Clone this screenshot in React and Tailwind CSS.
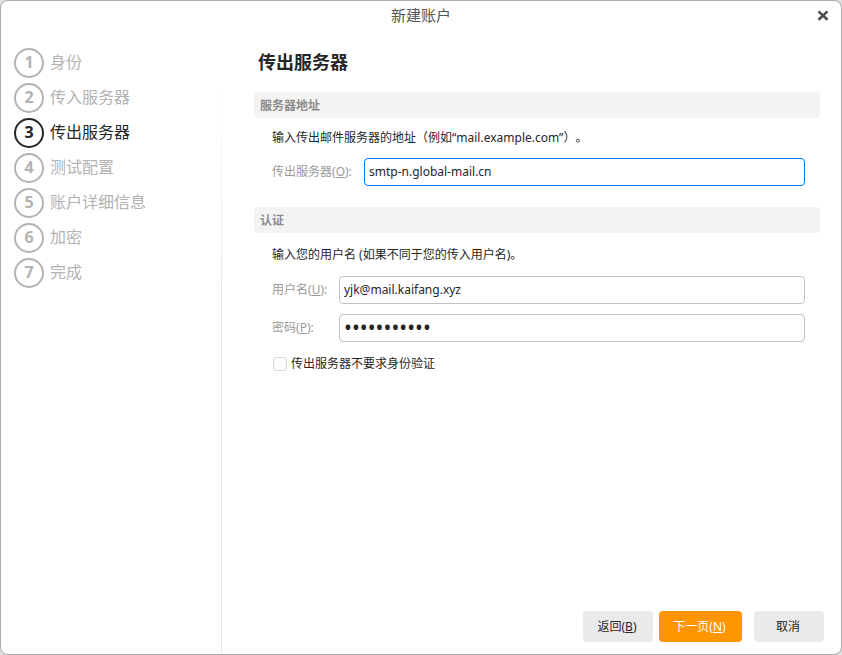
import { useState } from "react";

const steps = [
  "身份",
  "传入服务器",
  "传出服务器",
  "测试配置",
  "账户详细信息",
  "加密",
  "完成",
];

function Step({ number, label, active }) {
  return (
    <li
      aria-current={active ? "step" : undefined}
      className={`flex items-center gap-1.5 ${
        active ? "text-[#262626]" : "text-[#b3b3b3]"
      }`}
    >
      <span className="flex size-[30px] shrink-0 items-center justify-center rounded-full border-2 border-current pb-[3px] text-base leading-none font-bold">
        {number}
      </span>
      <span className="pb-0.5 text-base leading-5">{label}</span>
    </li>
  );
}

function Section({ title, children }) {
  return (
    <section>
      <h2 className="rounded bg-[#f3f3f3] px-1.5 pt-0.5 text-xs leading-6 font-bold text-[#8c8c8c]">
        {title}
      </h2>
      <div className="pr-[15px] pl-[18px]">{children}</div>
    </section>
  );
}

function Field({ id, label, accessKey, labelClass, type = "text", value, onChange, focused }) {
  return (
    <div className="flex items-center">
      <label
        htmlFor={id}
        className={`shrink-0 text-xs leading-4 text-[#999999] ${labelClass}`}
      >
        {label}(<u>{accessKey}</u>):
      </label>
      <input
        id={id}
        type={type}
        value={value}
        onChange={(e) => onChange(e.target.value)}
        className={`h-7 min-w-0 flex-1 rounded border bg-white px-1 text-[#262626] outline-none focus:border-[#007af5] ${
          type === "password" ? "text-[21px]" : "pb-0.5 text-xs"
        } ${focused ? "border-[#007af5]" : "border-[#c2c2c2]"}`}
      />
    </div>
  );
}

function App() {
  const [server, setServer] = useState("smtp-n.global-mail.cn");
  const [username, setUsername] = useState("yjk@mail.kaifang.xyz");
  const [password, setPassword] = useState("abcdefghijk");
  const [noAuth, setNoAuth] = useState(false);

  return (
    <div
      lang="zh-CN"
      className="min-h-screen bg-[#dedede] font-['Noto_Sans','Noto_Sans_CJK_SC',sans-serif] [text-spacing-trim:space-all]"
    >
      <div className="relative flex min-h-screen flex-col rounded-lg border border-[#ababab] bg-white text-[#262626]">
        <h1 className="py-0.5 text-center text-[15px] leading-6 text-[#555555]">
          新建账户
        </h1>
        <button
          type="button"
          aria-label="关闭"
          className="absolute top-2 right-3 pt-px text-[#4d4d4d]"
        >
          <svg width="12" height="12" viewBox="0 0 12 12" fill="none" stroke="currentColor" strokeWidth="2.6">
            <path d="M1.5 1.4 10.5 9.8M10.5 1.4 1.5 9.8" />
          </svg>
        </button>

        <div className="flex flex-1">
          <nav className="w-[220px] shrink-0 pt-[19px] pl-[13px]">
            <ol className="flex flex-col gap-[5px]">
              {steps.map((label, i) => (
                <Step key={label} number={i + 1} label={label} active={i === 2} />
              ))}
            </ol>
          </nav>
          <div className="mt-12 w-px bg-linear-to-b from-white to-[#e6e6e6] to-40%" />

          <main className="flex min-w-0 flex-1 flex-col">
            <div className="pt-[21px] pr-[21px] pl-8">
              <h2 className="mb-[18px] pl-1 text-lg leading-6 font-bold">
                传出服务器
              </h2>

              <div className="flex flex-col gap-[21px]">
                <Section title="服务器地址">
                  <p className="py-2.5 text-xs leading-5">
                    输入传出邮件服务器的地址（例如“mail.example.com”）。
                  </p>
                  <Field
                    id="server"
                    label="传出服务器"
                    accessKey="O"
                    labelClass="w-[92px]"
                    value={server}
                    onChange={setServer}
                    focused
                  />
                </Section>

                <Section title="认证">
                  <p className="pt-3 pb-[11px] text-xs leading-5">
                    输入您的用户名 (如果不同于您的传入用户名)。
                  </p>
                  <div className="flex flex-col gap-2.5">
                    <Field
                      id="username"
                      label="用户名"
                      accessKey="U"
                      labelClass="w-[67px]"
                      value={username}
                      onChange={setUsername}
                    />
                    <Field
                      id="password"
                      label="密码"
                      accessKey="P"
                      labelClass="w-[67px]"
                      type="password"
                      value={password}
                      onChange={setPassword}
                    />
                  </div>
                  <label className="mt-3 flex items-center gap-1 pl-px text-xs leading-5">
                    <input
                      type="checkbox"
                      checked={noAuth}
                      onChange={(e) => setNoAuth(e.target.checked)}
                      className="size-3.5 appearance-none rounded-[3px] border border-[#d6d6d6] bg-white checked:bg-[#007af5]"
                    />
                    传出服务器不要求身份验证
                  </label>
                </Section>
              </div>
            </div>

            <footer className="mt-auto flex justify-end pr-[17px] pb-3 text-xs">
              <button type="button" className="mr-1.5 h-[31px] w-[70px] rounded bg-[#eaeaea] pr-0.5">
                返回(<u>B</u>)
              </button>
              <button type="button" className="mr-3 h-[31px] w-[83px] rounded bg-[#ff9500] pr-0.5 text-white">
                下一页(<u>N</u>)
              </button>
              <button type="button" className="h-[31px] w-[70px] rounded bg-[#eaeaea] pr-0.5">
                取消
              </button>
            </footer>
          </main>
        </div>
      </div>
    </div>
  );
}

export default App;
